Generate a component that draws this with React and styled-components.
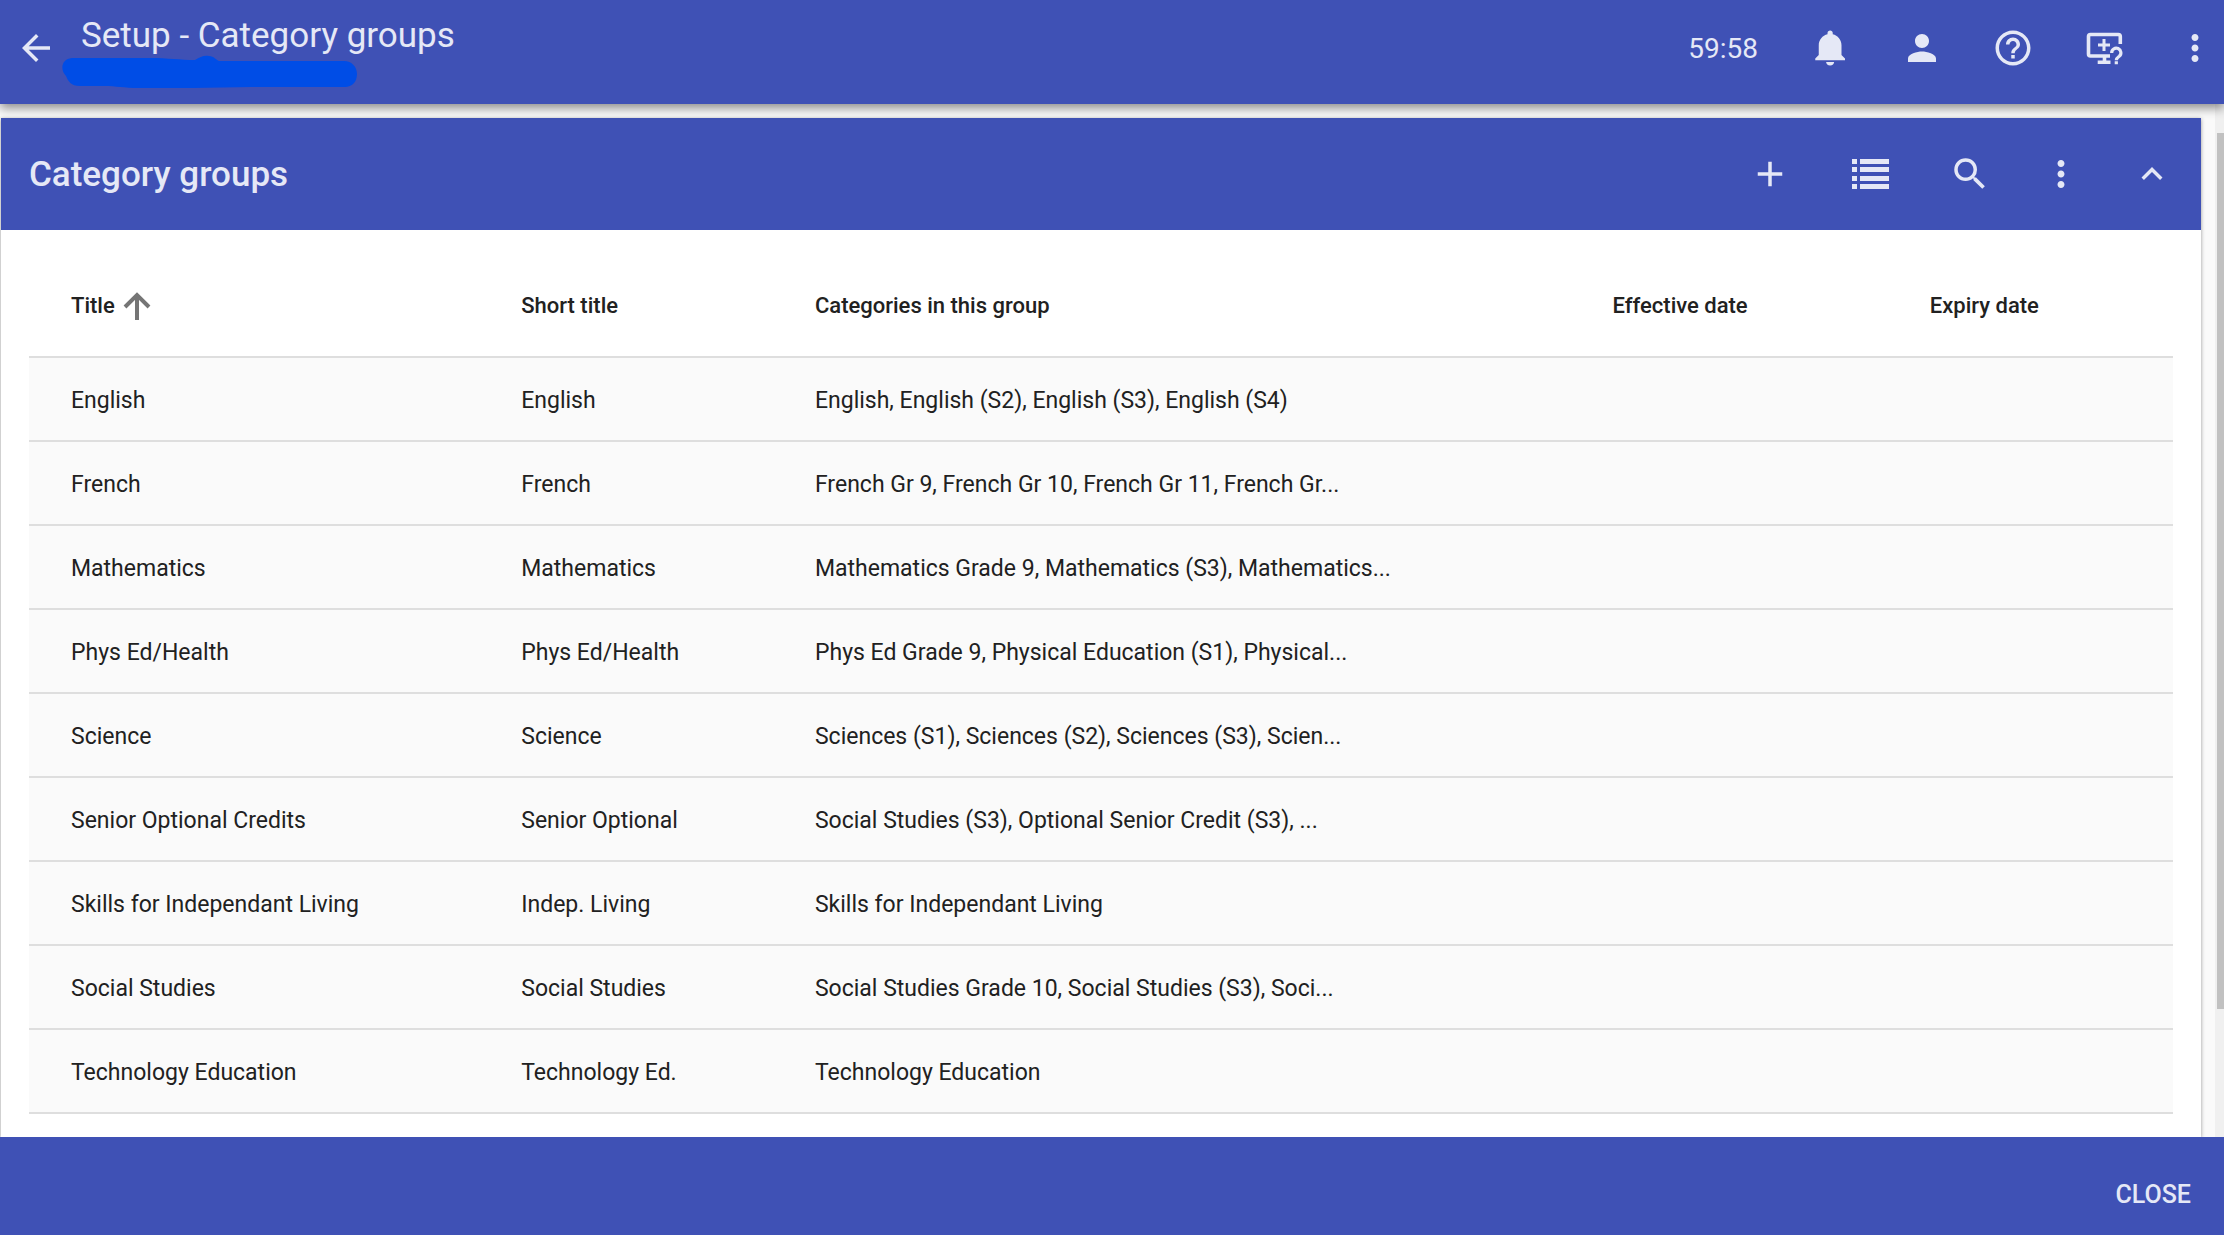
import React from 'react';
import styled, { createGlobalStyle } from 'styled-components';
import { MdArrowBack, MdPerson, MdHelpOutline, MdMoreVert, MdAdd, MdSearch, MdExpandLess } from 'react-icons/md';

const indigo = '#3f51b5';
const onIndigo = '#e5e8f6';

const Global = createGlobalStyle`
  * { box-sizing: border-box; }
  html, body, #root { height: 100%; margin: 0; }
  body {
    background: #fafafa;
    color: #212121;
    font-family: Roboto, "Liberation Sans", sans-serif;
    overflow: hidden;
  }
`;

const Page = styled.div`
  display: flex;
  flex-direction: column;
  height: 100%;
`;

const TopBar = styled.header`
  display: flex;
  align-items: center;
  flex: none;
  height: 104px;
  padding: 0 8px 8px 15px;
  background: ${indigo};
  color: ${onIndigo};
  box-shadow: 0 4px 10px rgba(0, 0, 0, 0.45);
  z-index: 1;
`;

const IconButton = styled.button`
  display: grid;
  place-items: center;
  flex: none;
  width: ${(p) => p.$width || 42}px;
  height: 42px;
  padding: 0;
  border: 0;
  background: none;
  color: inherit;
  cursor: pointer;
  svg { display: block; width: 42px; height: 42px; }
`;

const Heading = styled.div`
  flex: 1;
  display: flex;
  flex-direction: column;
  padding: 8px 0 0 5px;
`;

const PageTitle = styled.h1`
  margin: 0 0 0 19px;
  padding-top: 2px;
  font-size: 35px;
  line-height: 38px;
  font-weight: 400;
`;

const Redaction = styled.svg`
  display: block;
  width: 296px;
  height: 34px;
`;

const Clock = styled.time`
  margin-right: 52px;
  padding-top: 2px;
  font-size: 28px;
  line-height: 32px;
`;

const Actions = styled.div`
  display: flex;
  align-items: center;
  gap: 49px;
`;

const Body = styled.div`
  flex: 1;
  display: flex;
  min-height: 0;
`;

const Content = styled.main`
  flex: 1;
  padding: 14px 14px 0 1px;
  overflow: hidden;
`;

const Card = styled.section`
  min-height: 100%;
  background: #fff;
  box-shadow: 0 1px 4px rgba(0, 0, 0, 0.4);
`;

const CardHeader = styled.div`
  display: flex;
  align-items: center;
  justify-content: space-between;
  height: 112px;
  padding: 0 28px;
  background: ${indigo};
  color: ${onIndigo};
`;

const CardTitle = styled.h2`
  margin: 0;
  padding-top: 2px;
  font-size: 35px;
  line-height: 40px;
  font-weight: 500;
`;

const TableWrap = styled.div`
  padding: 28px 28px 0;
`;

const Table = styled.table`
  width: 100%;
  table-layout: fixed;
  border-collapse: collapse;
  text-align: left;
`;

const Column = styled.col`
  width: ${(p) => p.$share}%;
`;

const HeadCell = styled.th`
  height: 99px;
  padding: 0 0 2px 42px;
  border-bottom: 2px solid #dedede;
  font-size: 22px;
  line-height: 28px;
  font-weight: 500;
`;

const SortButton = styled.button`
  display: flex;
  align-items: center;
  gap: 8px;
  padding: 0;
  border: 0;
  background: none;
  color: inherit;
  font: inherit;
  cursor: pointer;
`;

const SortArrow = styled.svg`
  width: 28px;
  height: 28px;
`;

const Cell = styled.td`
  height: 84px;
  padding: 4px 0 0 42px;
  background: #fafafa;
  border-bottom: 2px solid #dedede;
  font-size: 23px;
  line-height: 32px;
  white-space: nowrap;
`;

const ScrollTrack = styled.div`
  flex: none;
  width: 9px;
  padding: 29px 0 0 2px;
  background: #f0f0f0;
`;

const ScrollThumb = styled.div`
  height: 876px;
  max-height: 90%;
  background: #c1c1c1;
`;

const Footer = styled.footer`
  display: flex;
  align-items: center;
  justify-content: flex-end;
  flex: none;
  height: 98px;
  padding: 18px 33px 0;
  background: ${indigo};
  color: ${onIndigo};
`;

const CloseButton = styled.button`
  padding: 0;
  border: 0;
  background: none;
  color: inherit;
  font: 500 25px/32px Roboto, "Liberation Sans", sans-serif;
  cursor: pointer;
`;

const BellIcon = () => (
  <svg viewBox="0 0 24 24" fill="currentColor">
    <path d="M11.500 22c1.300 0 2.300-.9 2.300-2H9.200c0 1.100 1 2 2.300 2zM18 16v-5.500c0-3.070-2.130-5.640-5-6.320V3.500c0-.83-.67-1.500-1.500-1.500S10 2.670 10 3.500v.68c-2.870.68-5 3.250-5 6.320V16l-2 2v1h17v-1l-2-2z" />
  </svg>
);

const RemoteHelpIcon = () => (
  <svg viewBox="0 0 42 42" fill="none" stroke="currentColor" strokeWidth="3.600">
    <path d="M27 29H7.500a2 2 0 0 1-2-2V9.500a2 2 0 0 1 2-2H35.300a2 2 0 0 1 2 2V17" />
    <path d="M14.700 35.200H27.500M21.500 29v6" />
    <path strokeWidth="3" d="M15 18h12M21 12v12" />
    <path strokeWidth="3.200" d="M28.700 26a4.600 4.600 0 1 1 7.500 3.300c-2 1.500-2.900 2.200-2.900 4M33.300 34.300v3" />
  </svg>
);

const ListIcon = () => (
  <svg viewBox="0 0 42 42" fill="currentColor">
    {[6, 14, 23, 31].map((y) => (
      <path key={y} d={`M3 ${y}h5v5H3zM11 ${y}h29v5H11z`} />
    ))}
  </svg>
);

const columns = [
  ['Title', 21],
  ['Short title', 13.7],
  ['Categories in this group', 37.2],
  ['Effective date', 14.8],
  ['Expiry date', 13.3],
];

const groups = [
  ['English', 'English', 'English, English (S2), English (S3), English (S4)'],
  ['French', 'French', 'French Gr 9, French Gr 10, French Gr 11, French Gr...'],
  ['Mathematics', 'Mathematics', 'Mathematics Grade 9, Mathematics (S3), Mathematics...'],
  ['Phys Ed/Health', 'Phys Ed/Health', 'Phys Ed Grade 9, Physical Education (S1), Physical...'],
  ['Science', 'Science', 'Sciences (S1), Sciences (S2), Sciences (S3), Scien...'],
  ['Senior Optional Credits', 'Senior Optional', 'Social Studies (S3), Optional Senior Credit (S3), ...'],
  ['Skills for Independant Living', 'Indep. Living', 'Skills for Independant Living'],
  ['Social Studies', 'Social Studies', 'Social Studies Grade 10, Social Studies (S3), Soci...'],
  ['Technology Education', 'Technology Ed.', 'Technology Education'],
];

export default function App() {
  return (
    <Page>
      <Global />
      <TopBar>
        <IconButton aria-label="Back"><MdArrowBack /></IconButton>
        <Heading>
          <PageTitle>Setup - Category groups</PageTitle>
          <Redaction viewBox="0 0 296 34" aria-hidden="true">
            <path fill="#004de6" d="M10 3H88C106 3 118 5 133 5C138 2 142 0 147 1C152 1 154 5 157 6H282C290 6 295 12 295 19C295 27 290 32 283 32H190C150 33 110 33 78 33C60 33 55 31 42 31H18C9 31 6 26 4 21C-2 15-1 4 10 3Z" />
          </Redaction>
        </Heading>
        <Clock>59:58</Clock>
        <Actions>
          <IconButton aria-label="Notifications"><BellIcon /></IconButton>
          <IconButton aria-label="Account"><MdPerson /></IconButton>
          <IconButton aria-label="Help"><MdHelpOutline /></IconButton>
          <IconButton aria-label="Remote support"><RemoteHelpIcon /></IconButton>
          <IconButton aria-label="More options"><MdMoreVert /></IconButton>
        </Actions>
      </TopBar>
      <Body>
        <Content>
          <Card>
            <CardHeader>
              <CardTitle>Category groups</CardTitle>
              <Actions>
                <IconButton aria-label="Add"><MdAdd /></IconButton>
                <IconButton $width={60} aria-label="List"><ListIcon /></IconButton>
                <IconButton aria-label="Search"><MdSearch /></IconButton>
                <IconButton aria-label="More"><MdMoreVert /></IconButton>
                <IconButton aria-label="Collapse"><MdExpandLess /></IconButton>
              </Actions>
            </CardHeader>
            <TableWrap>
              <Table>
                <colgroup>
                  {columns.map(([name, share]) => <Column key={name} $share={share} />)}
                </colgroup>
                <thead>
                  <tr>
                    {columns.map(([name], i) => (
                      <HeadCell key={name} scope="col" aria-sort={i === 0 ? 'ascending' : undefined}>
                        {i === 0 ? (
                          <SortButton>
                            {name}
                            <SortArrow viewBox="0 0 28 28" fill="none" stroke="#757575" strokeWidth="4" aria-hidden="true">
                              <path d="M14 28V3M2 15L14 3L26 15" />
                            </SortArrow>
                          </SortButton>
                        ) : name}
                      </HeadCell>
                    ))}
                  </tr>
                </thead>
                <tbody>
                  {groups.map(([title, short, categories]) => (
                    <tr key={title}>
                      <Cell>{title}</Cell>
                      <Cell>{short}</Cell>
                      <Cell>{categories}</Cell>
                      <Cell />
                      <Cell />
                    </tr>
                  ))}
                </tbody>
              </Table>
            </TableWrap>
          </Card>
        </Content>
        <ScrollTrack aria-hidden="true"><ScrollThumb /></ScrollTrack>
      </Body>
      <Footer>
        <CloseButton>CLOSE</CloseButton>
      </Footer>
    </Page>
  );
}
